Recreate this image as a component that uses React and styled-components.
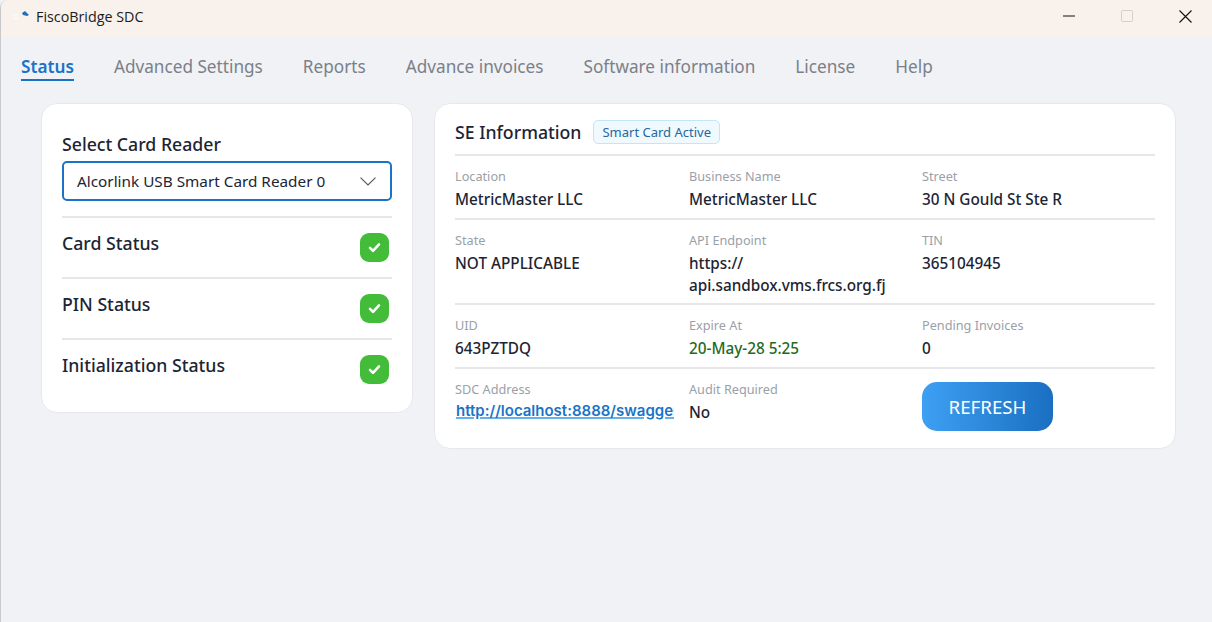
import styled, { createGlobalStyle } from "styled-components";

const GlobalStyle = createGlobalStyle`
  html, body {
    margin: 0;
    padding: 0;
    height: 100%;
    background: #f0f2f6;
    font-family: "Noto Sans", "Open Sans", sans-serif;
  }
  * { box-sizing: border-box; }
`;

const Window = styled.div`
  width: 1212px;
  height: 622px;
  overflow: hidden;
  background: #f0f2f6;
  border-left: 1px solid #c9c9cb;
  border-top-left-radius: 8px;
`;

const TitleBar = styled.div`
  height: 37px;
  background: #f8f1ec;
  display: flex;
  align-items: center;
  padding: 0 0 3px 11px;
`;

const AppName = styled.span`
  margin: 0 0 1px 6px;
  font-family: "Open Sans", sans-serif;
  font-size: 14.3px;
  color: #1c1c1c;
`;

const WindowControls = styled.div`
  margin: 0 -3px 2px auto;
  display: flex;
  align-items: center;
`;

const ControlButton = styled.div`
  width: 58.5px;
  height: 32px;
  display: flex;
  align-items: center;
  justify-content: center;
`;

const Tabs = styled.nav`
  display: flex;
  gap: 40px;
  padding: 17px 0 0 20px;
  height: 66px;
`;

const Tab = styled.div`
  height: 27px;
  font-size: 17.2px;
  line-height: 25px;
  font-weight: ${(p) => (p.$active ? 600 : 400)};
  color: ${(p) => (p.$active ? "#1a73c7" : "#7b8088")};
  border-bottom: ${(p) => (p.$active ? "2px solid #1a73c7" : "none")};
`;

const Content = styled.div`
  display: flex;
  align-items: flex-start;
  gap: 21px;
  padding-left: 40px;
`;

const Card = styled.section`
  background: #fff;
  border: 1px solid #e6e8ec;
  border-radius: 16px;
  padding: 20px;
`;

const ReaderCard = styled(Card)`
  width: 372px;
  height: 310px;
`;

const InfoCard = styled(Card)`
  width: 742px;
  height: 346px;
  padding-top: 10px;
`;

const FieldLabel = styled.div`
  font-size: 17.7px;
  line-height: 23px;
  font-weight: 500;
  color: #1d2433;
  margin-top: 9px;
`;

const Select = styled.div`
  height: 40px;
  margin: 5px 0 15px;
  padding: 0 14px 0 13px;
  border: 2px solid #1a73c7;
  border-radius: 5px;
  display: flex;
  align-items: center;
  justify-content: space-between;
  font-size: 15.3px;
  color: #1d2433;
`;

const StatusRow = styled.div`
  height: 61px;
  border-top: 2px solid #e6e7eb;
  display: flex;
  justify-content: space-between;
  padding: 13px 3px 0 0;
  font-size: 17.7px;
  line-height: 25px;
  font-weight: 500;
  color: #1d2433;
`;

const CheckBadge = styled.div`
  width: 29px;
  height: 29px;
  margin-top: 2px;
  border-radius: 9px;
  background: #43bc39;
  display: flex;
  align-items: center;
  justify-content: center;
`;

const InfoHeader = styled.div`
  display: flex;
  align-items: center;
  gap: 12px;
  height: 36px;
  border-bottom: 2px solid #e6e7eb;
  padding-bottom: 4px;
  box-sizing: content-box;
`;

const InfoTitle = styled.h2`
  margin: 0;
  font-size: 17.7px;
  font-weight: 500;
  color: #1d2433;
`;

const ActiveTag = styled.span`
  height: 24px;
  padding: 0 8px;
  border: 1px solid #c4e4f7;
  border-radius: 5px;
  background: #f0f9fe;
  color: #24689f;
  font-size: 13px;
  line-height: 22px;
`;

const InfoRow = styled.div`
  display: grid;
  grid-template-columns: 234px 233px 233px;
  height: ${(p) => p.$height}px;
  padding-top: 10px;
  border-bottom: ${(p) => (p.$last ? "none" : "2px solid #e6e7eb")};
`;

const Label = styled.div`
  font-size: 12.7px;
  line-height: 20px;
  color: #9a9fa8;
`;

const Value = styled.div`
  margin-top: 2px;
  font-size: 15.3px;
  line-height: 22px;
  font-weight: 500;
  color: ${(p) => p.$color || "#1d2433"};
`;

const AddressLink = styled.a`
  display: block;
  width: 218px;
  margin: 2px 0 0 1px;
  overflow: hidden;
  white-space: nowrap;
  font-family: Inter, "Liberation Sans", sans-serif;
  font-size: 15px;
  line-height: 20px;
  font-weight: 600;
  color: #1a73c7;
  text-decoration: underline;
  text-decoration-color: #66b0ec;
  text-decoration-thickness: 2px;
`;

const RefreshButton = styled.button`
  width: 131px;
  height: 49px;
  margin-top: 3px;
  border: none;
  border-radius: 15px;
  background: linear-gradient(90deg, #3ea0f3, #1a6fc1);
  color: #fff;
  font-family: inherit;
  font-size: 18.7px;
`;

function Logo() {
  return (
    <svg width="18" height="12" viewBox="0 0 18 12">
      <path d="M1 3h5v2H1zM1 6h5v3H1z" fill="#f6f7f9" />
      <path d="M10 2l3-2 4 4-2 1-4-1z" fill="#1e72c4" />
    </svg>
  );
}

function Check() {
  return (
    <svg width="13" height="11" viewBox="0 0 13 11">
      <path d="M2 5.8l3 3 6-6.4" fill="none" stroke="#fff" strokeWidth="2.6" strokeLinecap="round" strokeLinejoin="round" />
    </svg>
  );
}

const tabs = ["Status", "Advanced Settings", "Reports", "Advance invoices", "Software information", "License", "Help"];

export default function App() {
  return (
    <Window>
      <GlobalStyle />
      <TitleBar>
        <Logo />
        <AppName>FiscoBridge SDC</AppName>
        <WindowControls>
          <ControlButton>
            <svg width="12" height="2" viewBox="0 0 12 2"><path d="M0 1h12" stroke="#111" strokeWidth="1" /></svg>
          </ControlButton>
          <ControlButton>
            <svg width="12" height="12" viewBox="0 0 12 12"><rect x=".5" y=".5" width="11" height="11" rx="1" fill="none" stroke="#cfcfcf" /></svg>
          </ControlButton>
          <ControlButton>
            <svg width="13" height="13" viewBox="0 0 13 13"><path d="M.5.5l12 12M12.5.5l-12 12" stroke="#111" strokeWidth="1.1" /></svg>
          </ControlButton>
        </WindowControls>
      </TitleBar>
      <Tabs>
        {tabs.map((t, i) => (
          <Tab key={t} $active={i === 0}>{t}</Tab>
        ))}
      </Tabs>
      <Content>
        <ReaderCard>
          <FieldLabel>Select Card Reader</FieldLabel>
          <Select>
            Alcorlink USB Smart Card Reader 0
            <svg width="16" height="9" viewBox="0 0 16 9"><path d="M.5.7L8 8l7.5-7.3" fill="none" stroke="#555" strokeWidth="1.1" /></svg>
          </Select>
          {["Card Status", "PIN Status", "Initialization Status"].map((s) => (
            <StatusRow key={s}>
              {s}
              <CheckBadge><Check /></CheckBadge>
            </StatusRow>
          ))}
        </ReaderCard>
        <InfoCard>
          <InfoHeader>
            <InfoTitle>SE Information</InfoTitle>
            <ActiveTag>Smart Card Active</ActiveTag>
          </InfoHeader>
          <InfoRow $height={64}>
            <div><Label>Location</Label><Value>MetricMaster LLC</Value></div>
            <div><Label>Business Name</Label><Value>MetricMaster LLC</Value></div>
            <div><Label>Street</Label><Value>30 N Gould St Ste R</Value></div>
          </InfoRow>
          <InfoRow $height={85}>
            <div><Label>State</Label><Value>NOT APPLICABLE</Value></div>
            <div><Label>API Endpoint</Label><Value>https://<br />api.sandbox.vms.frcs.org.fj</Value></div>
            <div><Label>TIN</Label><Value>365104945</Value></div>
          </InfoRow>
          <InfoRow $height={64}>
            <div><Label>UID</Label><Value>643PZTDQ</Value></div>
            <div><Label>Expire At</Label><Value $color="#1f6b23">20-May-28 5:25</Value></div>
            <div><Label>Pending Invoices</Label><Value>0</Value></div>
          </InfoRow>
          <InfoRow $height={70} $last>
            <div><Label>SDC Address</Label><AddressLink href="#">http://localhost:8888/swagger</AddressLink></div>
            <div><Label>Audit Required</Label><Value>No</Value></div>
            <div><RefreshButton>REFRESH</RefreshButton></div>
          </InfoRow>
        </InfoCard>
      </Content>
    </Window>
  );
}
